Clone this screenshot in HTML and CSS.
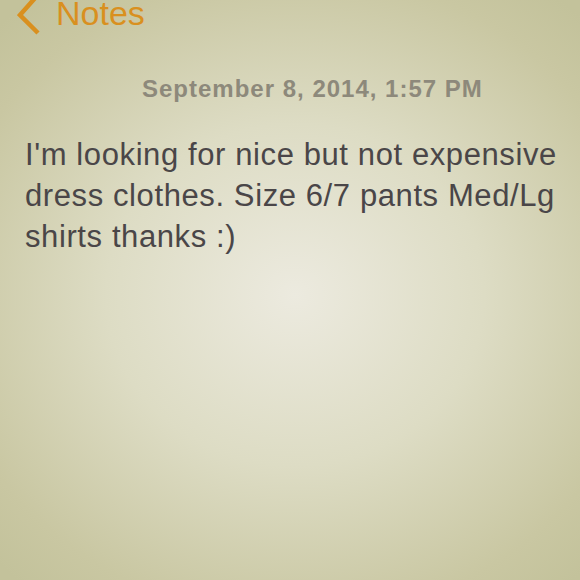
FILE: index.html
```html
<!DOCTYPE html>
<html>
<head>
    <title>Notes</title>
    <link rel="stylesheet" href="styles.css">
</head>
<body>
    <div class="note">
        <div class="nav">
            <svg class="back" width="30" height="40" viewBox="0 0 30 40">
                <path d="M19 -3 L3 15 L21 33" fill="none" stroke="#d9901f" stroke-width="4.5" stroke-linejoin="miter"/>
            </svg>
            <span class="nav-title">Notes</span>
        </div>
        <div class="date">September 8, 2014, 1:57 PM</div>
        <div class="text">I'm looking for nice but not expensive dress clothes. Size 6/7 pants Med/Lg shirts thanks :)</div>
    </div>
</body>
</html>
```

FILE: styles.css
```css
html, body { margin: 0; padding: 0; }
body { font-family: "Liberation Sans", Arial, sans-serif; width: 580px; height: 580px; overflow: hidden;
  background: radial-gradient(ellipse 420px 380px at 295px 295px, #eceadf 0%, #dddcc4 45%, #c9c7a2 85%, #c3c29b 100%); }
.note { height: 580px; }
.nav { display: flex; align-items: flex-start; height: 40px; margin-top: -7px; padding-left: 17px; }
.back { display: block; margin-top: 7px; }
.nav-title { color: #d9901f; font-size: 34px; line-height: 40px; margin-left: 9px; }
.date { color: #8d897b; font-size: 24px; font-weight: bold; letter-spacing: 1px; padding-left: 142px; margin-top: 41px; line-height: 30px; }
.text { color: #4a4648; font-size: 31px; letter-spacing: 0.6px; line-height: 41px; padding: 0 10px 0 25px; margin-top: 30px; }
```
